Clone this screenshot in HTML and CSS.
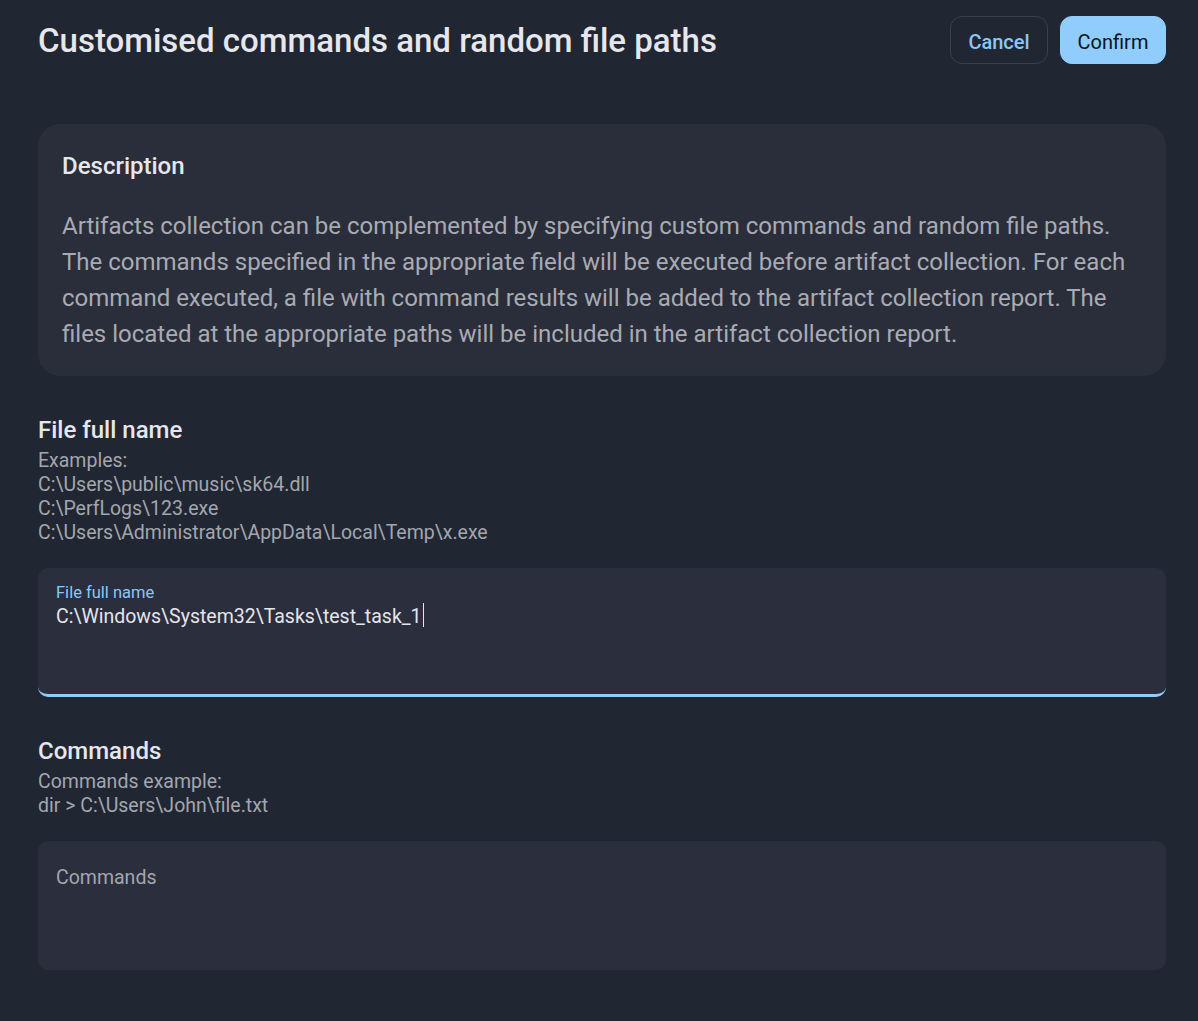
FILE: index.html
```html
<!DOCTYPE html>
<html lang="en">
<head>
<meta charset="utf-8">
<title>Customised commands and random file paths</title>
<link rel="stylesheet" href="styles.css">
</head>
<body>
<div class="page">
  <header class="topbar">
    <h1 class="title">Customised commands and random file paths</h1>
    <div class="actions">
      <button class="btn btn-outline">Cancel</button>
      <button class="btn btn-primary">Confirm</button>
    </div>
  </header>

  <section class="card">
    <h2 class="card-title">Description</h2>
    <p class="card-text">Artifacts collection can be complemented by specifying custom commands and random file paths. The commands specified in the appropriate field will be executed before artifact collection. For each command executed, a file with command results will be added to the artifact collection report. The files located at the appropriate paths will be included in the artifact collection report.</p>
  </section>

  <section class="group">
    <h3 class="group-title">File full name</h3>
    <div class="hint">
      <div>Examples:</div>
      <div>C:\Users\public\music\sk64.dll</div>
      <div>C:\PerfLogs\123.exe</div>
      <div>C:\Users\Administrator\AppData\Local\Temp\x.exe</div>
    </div>
    <div class="field field-active">
      <div class="field-label">File full name</div>
      <div class="field-value">C:\Windows\System32\Tasks\test_task_1<span class="caret"></span></div>
    </div>
  </section>

  <section class="group">
    <h3 class="group-title">Commands</h3>
    <div class="hint">
      <div>Commands example:</div>
      <div>dir &gt; C:\Users\John\file.txt</div>
    </div>
    <div class="field field-empty">
      <div class="field-placeholder">Commands</div>
    </div>
  </section>
</div>
</body>
</html>
```

FILE: styles.css
```css
* { box-sizing: border-box; }
html, body {
  margin: 0;
  padding: 0;
  background: #212633;
}
body {
  font-family: Roboto, "Noto Sans", "Liberation Sans", sans-serif;
  color: #e4e5ea;
}
.page {
  padding: 16px 32px 0 38px;
}
.topbar {
  display: flex;
  justify-content: space-between;
  align-items: flex-start;
  height: 108px;
}
.title {
  margin: 0;
  font-size: 33px;
  font-weight: 500;
  line-height: 50px;
  color: #e6e7ec;
}
.actions {
  display: flex;
  gap: 12px;
}
.btn {
  height: 48px;
  border-radius: 12px;
  font-family: inherit;
  font-size: 20px;
  font-weight: 500;
  padding: 4px 0 0 0;
  cursor: pointer;
}
.btn-outline {
  background: transparent;
  border: 1px solid #3b404d;
  color: #8ac8f8;
  width: 98px;
}
.btn-primary {
  background: #90cdfc;
  border: 1px solid #90cdfc;
  color: #0e1420;
  width: 106px;
  font-weight: 400;
}
.card {
  background: #2a2e3a;
  border-radius: 22px;
  padding: 27px 24px 24px 24px;
}
.card-title {
  margin: 0;
  font-size: 24px;
  font-weight: 500;
  line-height: 30px;
  color: #e6e7ec;
}
.card-text {
  margin: 27px 0 0 0;
  font-size: 24px;
  line-height: 36px;
  color: #a8abb3;
}
.group {
  margin-top: 39px;
}
.group-title {
  margin: 0 0 4px 0;
  font-size: 24px;
  font-weight: 500;
  line-height: 30px;
  color: #e6e7ec;
}
.hint {
  font-size: 19.5px;
  line-height: 24px;
  color: #a3a6ae;
}
.field {
  background: #2b2e3c;
  border-radius: 10px;
  height: 129px;
  margin-top: 23px;
  padding: 15px 18px 14px 18px;
  overflow: hidden;
}
.field-active {
  border-bottom: 3px solid #90cdfc;
}
.field-label {
  font-size: 16.5px;
  line-height: 20px;
  color: #8ac8f8;
}
.field-value {
  font-size: 19.5px;
  line-height: 28px;
  color: #e4e5ea;
}
.caret {
  display: inline-block;
  width: 1px;
  height: 24px;
  background: #e4e5ea;
  vertical-align: -4px;
  margin-left: 1px;
}
.field-empty {
  padding-top: 25px;
}
.field-placeholder {
  font-size: 19.5px;
  line-height: 24px;
  color: #a3a6ae;
}
```
